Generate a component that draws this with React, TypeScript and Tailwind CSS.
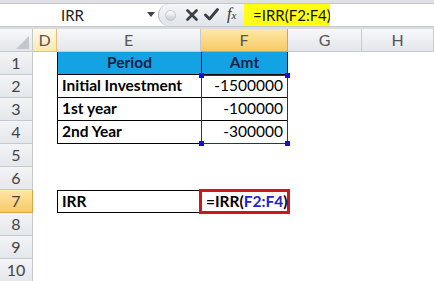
import React from 'react';

const hdrCell = 'flex items-center justify-center border-r border-b border-[#c6c9ce] text-[16px] text-[#555] bg-gradient-to-b from-[#f7f8fa] to-[#e3e6ea]';
const rowHdr = 'flex items-center justify-center border-r border-b border-[#c6c9ce] text-[16px] text-[#444] bg-gradient-to-b from-[#f3f4f6] to-[#e4e7eb]';

const App = () => {
  const rows = [1, 2, 3, 4, 5, 6, 7, 8, 9, 10];

  const renderRow = (r: number) => {
    const header = (
      <div
        key={`h${r}`}
        className={
          r === 7
            ? 'flex items-center justify-center border-r border-b border-[#d8a640] text-[16px] text-[#444] bg-gradient-to-b from-[#fde7a6] to-[#f8c865]'
            : rowHdr
        }
      >
        {r}
      </div>
    );
    const d = <div key={`d${r}`} />;
    let e: React.ReactNode = <div key={`e${r}`} />;
    let f: React.ReactNode = <div key={`f${r}`} />;

    if (r === 1) {
      e = (
        <div key="e1" className="flex items-center justify-center bg-[#13a2e4] border-l border-b border-black font-bold text-[#0d1f3f]">
          Period
        </div>
      );
      f = (
        <div key="f1" className="flex items-center justify-center bg-[#13a2e4] border-l border-r border-b border-black font-bold text-[#0d1f3f]">
          Amt
        </div>
      );
    } else if (r >= 2 && r <= 4) {
      const labels = ['Initial Investment', '1st year', '2nd Year'];
      const amts = ['-1500000', '-100000', '-300000'];
      e = (
        <div key={`e${r}`} className="flex items-center pl-[4px] border-l border-b border-black font-bold text-black">
          {labels[r - 2]}
        </div>
      );
      f = (
        <div key={`f${r}`} className="flex items-center justify-end pr-[4px] border-l border-r border-b border-black text-black">
          {amts[r - 2]}
        </div>
      );
    } else if (r === 7) {
      e = (
        <div key="e7" className="flex items-center pl-[4px] border border-black font-bold text-black">
          IRR
        </div>
      );
      f = (
        <div key="f7" className="relative flex items-center pl-[5px] font-bold text-black">
          <div className="absolute -left-[2px] -top-[1px] -right-[2px] -bottom-[1px] border-[3px] border-[#d5121e]" />
          <span className="relative">
            =IRR(<span className="text-[#2424c8]">F2:F4</span>)
          </span>
        </div>
      );
    }
    return [header, d, e, f, <div key={`g${r}`} />, <div key={`hh${r}`} />];
  };

  return (
    <div className="w-[434px] h-[281px] overflow-hidden bg-white font-['Lato','Open_Sans',sans-serif] text-[15.5px] leading-none">
      {/* formula bar */}
      <div className="h-[29px] flex flex-col">
        <div className="h-[4px] bg-[#dfe1e4] border-b border-[#c3c6ca]" />
        <div className="h-[22px] flex items-center bg-white">
          <div className="w-[158px] h-full flex items-center relative">
            <span className="pl-[61px] text-[15px] text-[#222]">IRR</span>
            <svg className="absolute left-[147px] top-[8px]" width="8" height="5" viewBox="0 0 8 5">
              <path d="M0 0 H8 L4 5 Z" fill="#444" />
            </svg>
          </div>
          <div className="w-[86px] h-full flex items-center bg-gradient-to-b from-[#f4f5f7] to-[#e2e5e9] rounded-l-full border-l border-[#b9bcc1] relative">
            <div className="ml-[6px] w-[11px] h-[11px] rounded-full bg-gradient-to-b from-[#ffffff] to-[#c8ccd2] border border-[#c2c5ca]" />
            <svg className="absolute left-[27px] top-[5px]" width="12" height="12" viewBox="0 0 12 12">
              <path d="M1.5 1.5 L10.5 10.5 M10.5 1.5 L1.5 10.5" stroke="#3b3e44" strokeWidth="2.6" strokeLinecap="round" />
            </svg>
            <svg className="absolute left-[45px] top-[4px]" width="15" height="13" viewBox="0 0 15 13">
              <path d="M1.5 7 L5.5 11 L13.5 1.5" stroke="#3b3e44" strokeWidth="2.8" fill="none" strokeLinecap="round" strokeLinejoin="round" />
            </svg>
            <span className="absolute left-[68px] top-[2px] font-['Liberation_Serif',serif] italic text-[16px] text-[#333]">
              f<span className="text-[11px]">x</span>
            </span>
          </div>
          <div className="w-[86px] h-full flex items-center bg-[#ffff14] pl-[9px] text-[15px] text-[#111]">
            =IRR(F2:F4)
          </div>
          <div className="flex-1 h-full bg-white" />
        </div>
        <div className="h-[3px] bg-[#d9dbde] border-t border-[#c6c9cd]" />
      </div>

      {/* sheet */}
      <div className="relative grid grid-cols-[33px_24px_144px_87px_74px_72px] auto-rows-[23px]">
        <div className={`${hdrCell} relative`}>
          <svg className="absolute left-[16px] top-[7px]" width="13" height="13" viewBox="0 0 13 13">
            <path d="M13 0 V13 H0 Z" fill="#c3c6cb" />
          </svg>
        </div>
        <div className="flex items-center justify-center border-r border-b border-[#e2c27a] text-[16px] text-[#555] bg-gradient-to-b from-[#fffbea] to-[#fbe7a8]">D</div>
        <div className={hdrCell}>E</div>
        <div className="flex items-center justify-center border-r border-b border-[#d8a640] text-[16px] text-[#555] bg-gradient-to-b from-[#fde9aa] to-[#f8c962]">F</div>
        <div className={hdrCell}>G</div>
        <div className={hdrCell}>H</div>
        {rows.map((r) => renderRow(r))}

        {/* range selection F2:F4 */}
        <div className="absolute left-[201px] top-[46px] w-[87px] h-[69px] border border-[#2323c0] pointer-events-none">
          <div className="absolute -left-[3px] -top-[3px] w-[5px] h-[5px] bg-[#1010d8]" />
          <div className="absolute -right-[3px] -top-[3px] w-[5px] h-[5px] bg-[#1010d8]" />
          <div className="absolute -left-[3px] -bottom-[3px] w-[5px] h-[5px] bg-[#1010d8]" />
          <div className="absolute -right-[3px] -bottom-[3px] w-[5px] h-[5px] bg-[#1010d8]" />
        </div>
      </div>
    </div>
  );
};

export default App;
